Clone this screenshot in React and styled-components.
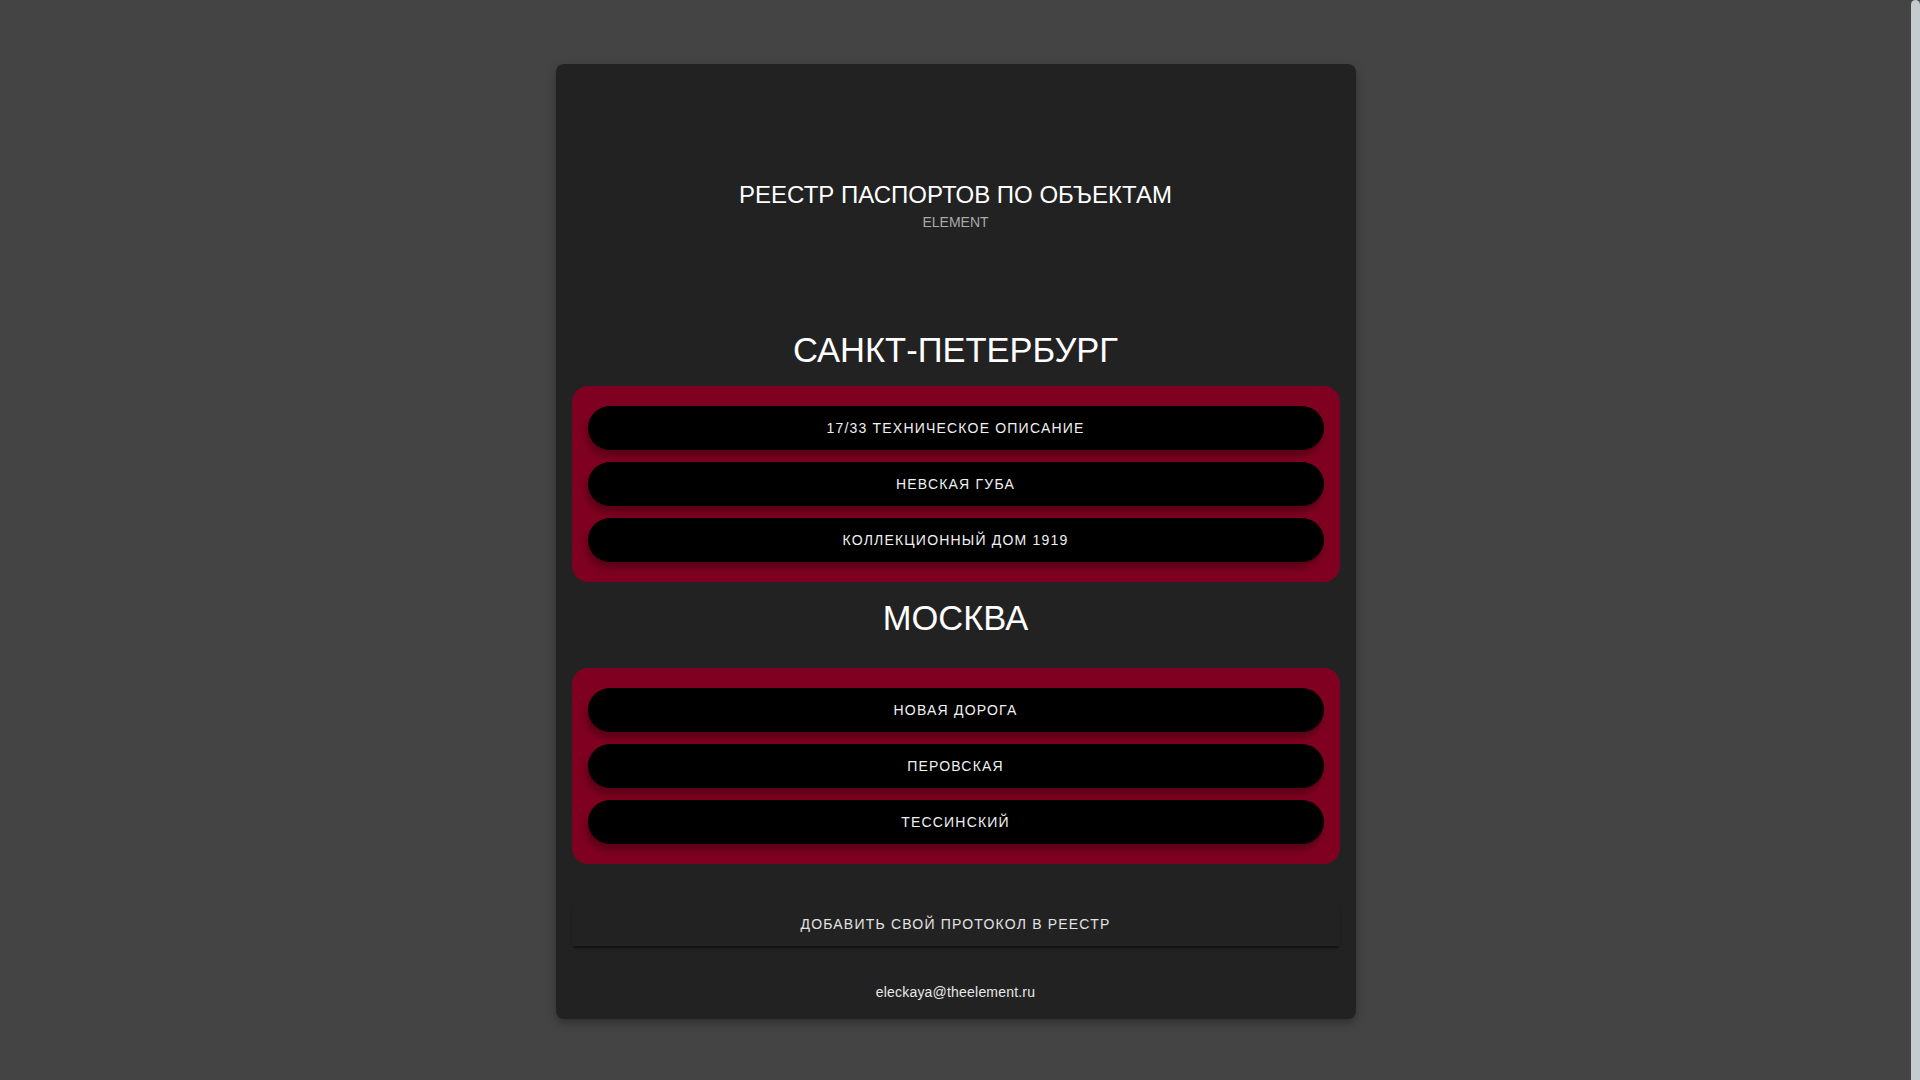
import React from "react"
import styled, { createGlobalStyle } from "styled-components"

const cities = [
  {
    name: "Санкт-Петербург",
    top: 101,
    gap: 16,
    objects: ["17/33 Техническое описание", "Невская губа", "Коллекционный дом 1919"],
  },
  {
    name: "Москва",
    top: 17,
    gap: 30,
    objects: ["Новая дорога", "Перовская", "Тессинский"],
  },
]

export default function App() {
  return (
    <>
      <GlobalStyle />
      <Card>
        <Header>
          <Title>Реестр паспортов по объектам</Title>
          <Subtitle>ELEMENT</Subtitle>
        </Header>
        {cities.map((city) => (
          <Section key={city.name} top={city.top}>
            <CityName gap={city.gap}>{city.name}</CityName>
            <ObjectList>
              {city.objects.map((obj) => (
                <ObjectButton key={obj}>{obj}</ObjectButton>
              ))}
            </ObjectList>
          </Section>
        ))}
        <AddButton>Добавить свой протокол в реестр</AddButton>
        <Footer>eleckaya@theelement.ru</Footer>
      </Card>
      <ScrollThumb />
    </>
  )
}

const GlobalStyle = createGlobalStyle`
  html, body {
    margin: 0;
    background: #444;
    font-family: "Liberation Sans", Arial, sans-serif;
  }

  body {
    padding: 64px 9px 62px 0;
  }

  ::-webkit-scrollbar {
    width: 0;
  }
`

// stands in for the thin scrollbar on the right edge of the page
const ScrollThumb = styled.div`
  position: fixed;
  top: 0;
  right: 0;
  bottom: 0;
  width: 9px;
  background: #c6ccce;
  border-radius: 5px 5px 0 0;
`

const Card = styled.div`
  width: 800px;
  margin: 0 auto;
  box-sizing: border-box;
  padding: 0 16px 19px;
  background: #222;
  border-radius: 8px;
  box-shadow: 0 4px 8px rgba(0, 0, 0, 0.3);
  color: #fff;
  text-align: center;
`

const Header = styled.div`
  padding-top: 117px;
  display: flex;
  flex-direction: column;
  align-items: center;
  gap: 5px;
`

const Title = styled.h1`
  margin: 0;
  font-size: 24px;
  font-weight: 400;
  text-transform: uppercase;
  color: #fff;
`

const Subtitle = styled.div`
  font-size: 14px;
  color: #a9a9a9;
`

const Section = styled.section`
  margin-top: ${(p) => p.top}px;
`

const CityName = styled.h2`
  margin: 0 0 ${(p) => p.gap}px;
  font-size: 34.5px;
  font-weight: 400;
  text-transform: uppercase;
  color: #fff;
`

const ObjectList = styled.div`
  display: flex;
  flex-direction: column;
  gap: 12px;
  padding: 20px 16px;
  background: #7f0020;
  border-radius: 16px;
`

const ObjectButton = styled.div`
  height: 44px;
  display: flex;
  align-items: center;
  justify-content: center;
  background: #000;
  border-radius: 22px;
  box-shadow: -2px 6px 6px rgba(0, 0, 0, 0.28);
  color: #f0f0f0;
  font-size: 14px;
  letter-spacing: 1.2px;
  text-transform: uppercase;
  cursor: pointer;
`

const AddButton = styled.div`
  margin-top: 38px;
  height: 44px;
  display: flex;
  align-items: center;
  justify-content: center;
  background: #222;
  box-shadow: 0 3px 2px -1px rgba(0, 0, 0, 0.5);
  color: #e2e2e2;
  font-size: 14px;
  letter-spacing: 1.2px;
  text-transform: uppercase;
  cursor: pointer;
`

const Footer = styled.div`
  margin-top: 38px;
  font-size: 14px;
  letter-spacing: 0.2px;
  color: #e8e8e8;
`
